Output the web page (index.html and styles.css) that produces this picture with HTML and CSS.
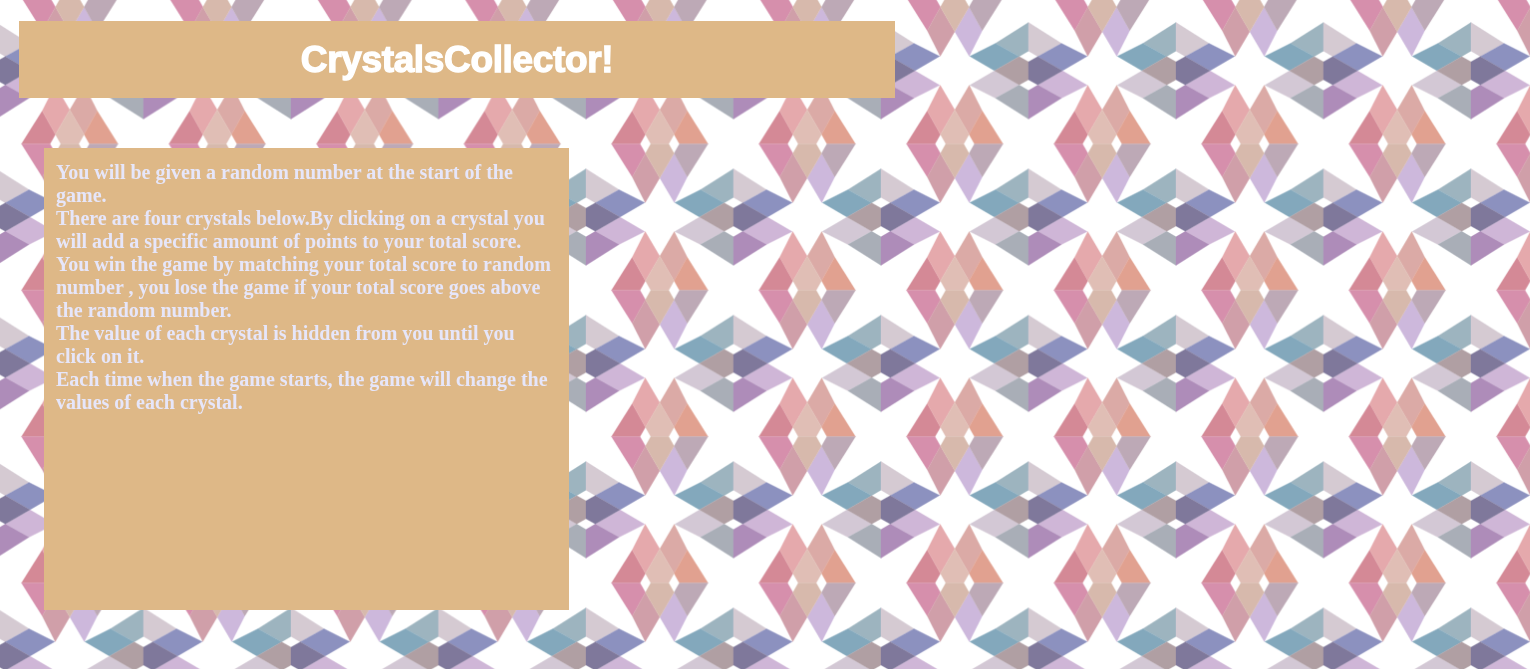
FILE: index.html
```html
<!DOCTYPE html>
<html lang="en">
<head>
<meta charset="utf-8">
<title>CrystalsCollector!</title>
<link rel="stylesheet" href="styles.css">
</head>
<body>
<svg class="backdrop" aria-hidden="true">
  <defs>
    <g id="upright">
      <polygon class="rose" points="-27.5,-33 -14.3,-9.5 -19.7,0 -48.3,0"/>
      <polygon class="blush" points="-14.5,-58.7 0,-34 -14.3,-9.5 -27.5,-33"/>
      <polygon class="salmon" points="14.5,-58.7 0,-34 14.3,-9.5 27.5,-33"/>
      <polygon class="orange" points="27.5,-33 14.3,-9.5 19.7,0 48.3,0"/>
      <polygon class="peach" points="0,-34 14.3,-9.5 9,0 -9,0 -14.3,-9.5"/>
      <polygon class="pink" points="-27.5,33 -14.3,9.5 -19.7,0 -48.3,0"/>
      <polygon class="mauve" points="-14.5,58.7 0,34 -14.3,9.5 -27.5,33"/>
      <polygon class="lavender" points="14.5,58.7 0,34 14.3,9.5 27.5,33"/>
      <polygon class="heather" points="27.5,33 14.3,9.5 19.7,0 48.3,0"/>
      <polygon class="sand" points="0,34 14.3,9.5 9,0 -9,0 -14.3,9.5"/>
    </g>
    <g id="flat">
      <polygon class="mist" points="-33,-27.5 -9.3,-14.3 0,-19.7 0,-48.3"/>
      <polygon class="teal" points="-58.7,-14.5 -34,0 -9.3,-14.3 -33,-27.5"/>
      <polygon class="pearl" points="-58.7,14.5 -34,0 -9.3,14.3 -33,27.5"/>
      <polygon class="grey" points="-33,27.5 -9.3,14.3 0,19.7 0,48.3"/>
      <polygon class="taupe" points="-34,0 -9.3,-14.3 0,-9 0,9 -9.3,14.3"/>
      <polygon class="cloud" points="33,-27.5 9.3,-14.3 0,-19.7 0,-48.3"/>
      <polygon class="blue" points="58.7,-14.5 34,0 9.3,-14.3 33,-27.5"/>
      <polygon class="lilac" points="58.7,14.5 34,0 9.3,14.3 33,27.5"/>
      <polygon class="purple" points="33,27.5 9.3,14.3 0,19.7 0,48.3"/>
      <polygon class="indigo" points="34,0 9.3,-14.3 0,-9 0,9 9.3,14.3"/>
    </g>
    <pattern id="crystals" x="-4" y="-75.6" width="147.5" height="146.35" patternUnits="userSpaceOnUse">
      <use href="#flat"/>
      <use href="#flat" x="147.5"/>
      <use href="#flat" y="146.35"/>
      <use href="#flat" x="147.5" y="146.35"/>
      <use href="#upright" x="73.75" y="73.17"/>
    </pattern>
  </defs>
  <rect width="100%" height="100%" fill="url(#crystals)"/>
</svg>
<main class="page">
  <header class="banner"><h1 class="title">CrystalsCollector!</h1></header>
  <section class="rules">
    <p>You will be given a random number at the start of the game.</p>
    <p>There are four crystals below.By clicking on a crystal you will add a specific amount of points to your total score.</p>
    <p>You win the game by matching your total score to random number , you lose the game if your total score goes above the random number.</p>
    <p>The value of each crystal is hidden from you until you click on it.</p>
    <p>Each time when the game starts, the game will change the values of each crystal.</p>
  </section>
</main>
</body>
</html>
```

FILE: styles.css
```css
* { box-sizing: border-box; }
body { margin: 0; background: #fff; overflow: hidden; }
.backdrop { position: fixed; inset: 0; width: 100%; height: 100%; z-index: -1; }
.backdrop polygon { fill: currentColor; stroke: currentColor; stroke-width: 0.3; }
.rose { color: #d48996; }
.blush { color: #e5a9ac; }
.salmon { color: #dbaaa6; }
.orange { color: #e1a190; }
.peach { color: #e0beb5; }
.pink { color: #d68fac; }
.mauve { color: #d09fa9; }
.lavender { color: #cdb8dc; }
.heather { color: #bda9b6; }
.sand { color: #d7b9ac; }
.mist { color: #9db4bf; }
.teal { color: #83a8bc; }
.pearl { color: #d3c8d5; }
.grey { color: #a9aeb7; }
.taupe { color: #b09fa3; }
.cloud { color: #d5cad2; }
.blue { color: #8c91bf; }
.lilac { color: #cfb6d7; }
.purple { color: #ae8cb9; }
.indigo { color: #7f789b; }
.page { padding: 21px 0 0 19px; }
.banner {
  display: flex;
  align-items: center;
  justify-content: center;
  width: 876px;
  height: 77px;
  background: #deb887;
}
.title {
  margin: 0;
  color: #fff;
  font: bold 37px/44px "Liberation Sans", Arial, sans-serif;
  letter-spacing: -0.35px;
  -webkit-text-stroke: 1.3px #fff;
}
.rules {
  width: 525px;
  height: 462px;
  margin: 50px 0 0 25px;
  padding: 13px 12px;
  background: #deb887;
  color: #e6e6fa;
  font: bold 20px/23px "Liberation Serif", "Times New Roman", serif;
}
.rules p { margin: 0; }
```
